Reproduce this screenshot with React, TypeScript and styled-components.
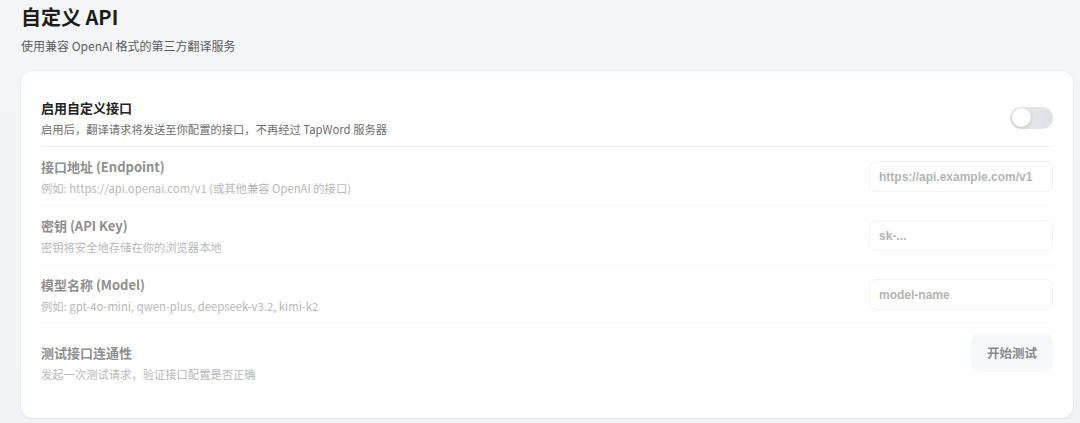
import React from "react";
import styled, { createGlobalStyle } from "styled-components";

const GlobalStyle = createGlobalStyle`
  html, body {
    margin: 0;
    padding: 0;
    background: #f3f4f6;
  }
  body {
    font-family: "Noto Sans CJK SC", "Noto Sans", sans-serif;
    color: #222;
  }
  * {
    box-sizing: border-box;
  }
`;

const Page = styled.div`
  height: 423px;
  padding: 3px 7px 0 21px;
  background: linear-gradient(180deg, #f4f5f7 0%, #f2f3f5 100%);
  overflow: hidden;
`;

const Title = styled.h1`
  margin: 0;
  font-size: 20px;
  line-height: 28px;
  font-weight: 700;
  color: #1c1c1c;
`;

const Subtitle = styled.p`
  margin: 6px 0 16px;
  font-size: 12px;
  line-height: 18px;
  color: #5c5c5c;
`;

const Card = styled.section`
  background: #fff;
  border-radius: 12px;
  box-shadow: 0 1px 3px rgba(0, 0, 0, 0.05), 0 0 0 1px rgba(0, 0, 0, 0.015);
  padding: 17px 20px 27px;
`;

type Divider = "strong" | "faint" | "none";

const Row = styled.div<{ $divider: Divider; $top?: boolean }>`
  display: flex;
  justify-content: space-between;
  align-items: ${(p) => (p.$top ? "flex-start" : "center")};
  padding: ${(p) => (p.$top ? "9px 0 9px" : "10px 0 9px")};
  border-bottom: ${(p) =>
    p.$divider === "strong"
      ? "1px solid #eceef1"
      : p.$divider === "faint"
      ? "1px solid #f8f9fa"
      : "none"};
`;

const Info = styled.div<{ $offset?: number }>`
  display: flex;
  flex-direction: column;
  gap: 3px;
  padding-top: ${(p) => p.$offset ?? 0}px;
`;

const Label = styled.div<{ $muted?: boolean }>`
  font-size: 13px;
  line-height: 20px;
  font-weight: 700;
  color: ${(p) => (p.$muted ? "#8e8e8e" : "#222")};
`;

const Desc = styled.div<{ $muted?: boolean }>`
  font-size: 11.3px;
  line-height: 16px;
  color: ${(p) => (p.$muted ? "#b8b8b8" : "#6e6e6e")};
`;

const Track = styled.div`
  width: 43px;
  height: 22px;
  border-radius: 11px;
  background: linear-gradient(90deg, #e9eaed, #dfe1e5);
  display: flex;
  align-items: center;
  padding: 0 2px;
`;

const Knob = styled.div`
  width: 19px;
  height: 19px;
  border-radius: 50%;
  background: #fff;
  box-shadow: 0 1px 3px rgba(0, 0, 0, 0.22);
`;

const Field = styled.input`
  width: 184px;
  height: 31px;
  border: 1px solid #f1f2f4;
  border-radius: 7px;
  background: #fff;
  padding: 0 9px;
  font-family: "Liberation Sans", Arial, sans-serif;
  font-size: 12px;
  font-weight: 700;
  outline: none;
  &::placeholder {
    color: #b3b3b3;
  }
`;

const TestButton = styled.button`
  height: 39px;
  padding: 0 16px;
  border: none;
  border-radius: 8px;
  background: #f7f8fa;
  font-family: "Noto Sans CJK SC", sans-serif;
  font-size: 12.5px;
  font-weight: 700;
  color: #8a8a8a;
`;

const fields = [
  {
    label: "接口地址 (Endpoint)",
    desc: "例如: https://api.openai.com/v1 (或其他兼容 OpenAI 的接口)",
    placeholder: "https://api.example.com/v1",
  },
  {
    label: "密钥 (API Key)",
    desc: "密钥将安全地存储在你的浏览器本地",
    placeholder: "sk-...",
  },
  {
    label: "模型名称 (Model)",
    desc: "例如: gpt-4o-mini, qwen-plus, deepseek-v3.2, kimi-k2",
    placeholder: "model-name",
  },
];

export default function App() {
  return (
    <Page>
      <GlobalStyle />
      <Title>自定义 API</Title>
      <Subtitle>使用兼容 OpenAI 格式的第三方翻译服务</Subtitle>
      <Card>
        <Row $divider="strong">
          <Info>
            <Label>启用自定义接口</Label>
            <Desc>启用后，翻译请求将发送至你配置的接口，不再经过 TapWord 服务器</Desc>
          </Info>
          <Track>
            <Knob />
          </Track>
        </Row>
        {fields.map((f) => (
          <Row key={f.label} $divider="faint">
            <Info>
              <Label $muted>{f.label}</Label>
              <Desc $muted>{f.desc}</Desc>
            </Info>
            <Field disabled placeholder={f.placeholder} />
          </Row>
        ))}
        <Row $divider="none" $top>
          <Info $offset={10}>
            <Label $muted>测试接口连通性</Label>
            <Desc $muted>发起一次测试请求，验证接口配置是否正确</Desc>
          </Info>
          <TestButton disabled>开始测试</TestButton>
        </Row>
      </Card>
    </Page>
  );
}
